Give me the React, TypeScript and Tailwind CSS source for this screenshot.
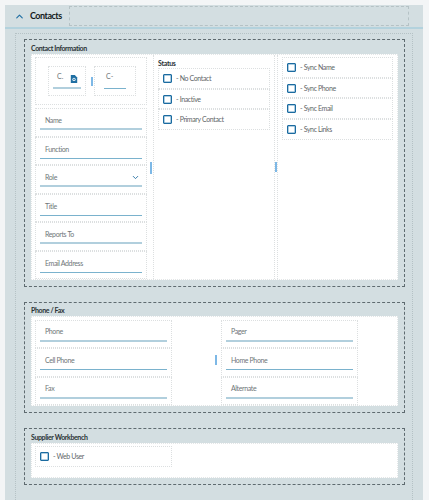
import { ChevronUp, ChevronDown } from "lucide-react";

const font = { fontFamily: 'Lato, "Noto Sans", sans-serif' };

function Field({ label, thin, select }: { label: string; thin?: boolean; select?: boolean }) {
  return (
    <div className="h-[28.5px] border border-dotted border-[#dcdfe0] px-[4px] pt-[3px]">
      <div className={`h-[18px] flex items-center justify-between pl-[5px] pr-[2px] ${thin ? "border-b-[1px] border-[#7ab2cd]" : "border-b-[2px] border-[#b1cfdd]"}`}>
        <span className="text-[7px] tracking-[-0.38px] text-[#6f7679]">{label}</span>
        {select && <ChevronDown size={9} strokeWidth={2.5} className="text-[#2f76a6]" />}
      </div>
    </div>
  );
}

function Check({ label }: { label: string }) {
  return (
    <div className="h-[20.7px] border border-dotted border-[#dcdfe0] flex items-center pl-[4px] gap-[4px]">
      <span className="w-[9px] h-[9px] border border-[#1b6ba0] rounded-[1px] shadow-[inset_0_0_0_0.5px_#5f9cc4] shrink-0" />
      <span className="text-[7px] tracking-[-0.38px] text-[#5f6669]">- {label}</span>
    </div>
  );
}

function Splitter({ className }: { className: string }) {
  return <div className={`w-[2px] bg-[#7db8e6] ${className}`} />;
}

function Section({ title, className, children }: { title: string; className: string; children: React.ReactNode }) {
  return (
    <div className={`border border-dashed border-[#5f6b70] px-[6px] flex flex-col ${className}`}>
      <div className="h-[14px] pt-[2px] flex items-center text-[7px] tracking-[-0.38px] font-bold text-[#2b3336]">{title}</div>
      <div className="flex-1 bg-white border border-dotted border-[#e3e6e7] flex">{children}</div>
    </div>
  );
}

export default function App() {
  return (
    <div className="w-[429px] h-[500px] overflow-hidden bg-[#f3f5f6] pl-[5px] pr-[6px] pt-[5px]" style={font}>
      <div className="h-[495px] bg-[#d3dee1] flex flex-col">
        <div className="h-[24px] shrink-0 flex items-center border-b-2 border-[#b3d2dd]">
          <ChevronUp size={11} strokeWidth={2.5} className="ml-[9px] text-[#1f6fa3]" />
          <span className="ml-[5px] text-[9px] tracking-[-0.5px] font-bold text-[#14191b] w-[39px]">Contacts</span>
          <div className="w-[340px] h-[20px] border border-dashed border-[#b5c2c5]" />
        </div>
        <div className="flex-1 pt-[4px] pl-[10px] pr-[10px]">
          <div className="h-full border-x border-t border-dotted border-[#b5c2c5] pt-[5px] pl-[8px] pr-[7px] flex flex-col gap-[15px]">
            <Section title="Contact Information" className="h-[248px] pb-[6px]">
              <div className="w-[118px] pl-[3px] pr-[3px] pt-[2px]">
                <div className="h-[48px] border border-dotted border-[#dcdfe0] flex items-center pl-[12px]">
                  <div className="relative w-[38px] h-[30px] border border-dotted border-[#dcdfe0] px-[4px] pt-[4px]">
                    <div className="h-[18px] border-b-2 border-[#b1cfdd] text-[7px] text-[#6f7679] pl-[4px]">C.</div>
                    <svg viewBox="0 0 10 10" className="absolute left-[21px] top-[8px] w-[8px] h-[8px]">
                      <path d="M1 0h5l3 3v7H1z" fill="#1f6fa3" />
                      <circle cx="5" cy="5.5" r="2" fill="#fff" />
                      <circle cx="5" cy="5.5" r="1" fill="#1f6fa3" />
                    </svg>
                  </div>
                  <Splitter className="h-[9px] ml-[5px] mr-[1px]" />
                  <div className="w-[42px] h-[30px] border border-dotted border-[#dcdfe0] px-[9px] pt-[4px]">
                    <div className="h-[18px] border-b-[1px] border-[#7ab2cd] text-[7px] text-[#6f7679] pl-[2px]">C-</div>
                  </div>
                </div>
                <div className="mt-[3px]">
                  <Field label="Name" />
                  <Field label="Function" thin />
                  <Field label="Role" select />
                  <Field label="Title" thin />
                  <Field label="Reports To" />
                  <Field label="Email Address" thin />
                </div>
              </div>
              <div className="w-[3px] flex items-start pt-[107px]"><Splitter className="h-[12px]" /></div>
              <div className="w-[122px] border-x border-dotted border-[#dcdfe0] pl-[4px] pr-[4px]">
                <div className="h-[13px] flex items-end text-[7px] tracking-[-0.3px] font-bold text-[#2b3336]">Status</div>
                <Check label="No Contact" />
                <Check label="Inactive" />
                <Check label="Primary Contact" />
              </div>
              <div className="w-[2px] flex items-start pt-[107px]"><Splitter className="h-[10px]" /></div>
              <div className="flex-1 border-l border-dotted border-[#dcdfe0] pl-[4px] pr-[4px] pt-[2px]">
                <Check label="Sync Name" />
                <Check label="Sync Phone" />
                <Check label="Sync Email" />
                <Check label="Sync Links" />
              </div>
            </Section>
            <Section title="Phone / Fax" className="h-[111px] pb-[6px]">
              <div className="w-[183px] pl-[3px] pt-[3px]">
                <div className="w-[137px]">
                  <Field label="Phone" />
                  <Field label="Cell Phone" thin />
                  <Field label="Fax" />
                </div>
              </div>
              <div className="w-[2px] flex items-start pt-[38px]"><Splitter className="h-[10px]" /></div>
              <div className="flex-1 pl-[4px] pt-[3px]">
                <div className="w-[137px]">
                  <Field label="Pager" />
                  <Field label="Home Phone" thin />
                  <Field label="Alternate" />
                </div>
              </div>
            </Section>
            <Section title="Supplier Workbench" className="h-[57px] pb-[6px]">
              <div className="w-[140px] pl-[3px] pt-[2px]">
                <Check label="Web User" />
              </div>
            </Section>
          </div>
        </div>
      </div>
    </div>
  );
}
